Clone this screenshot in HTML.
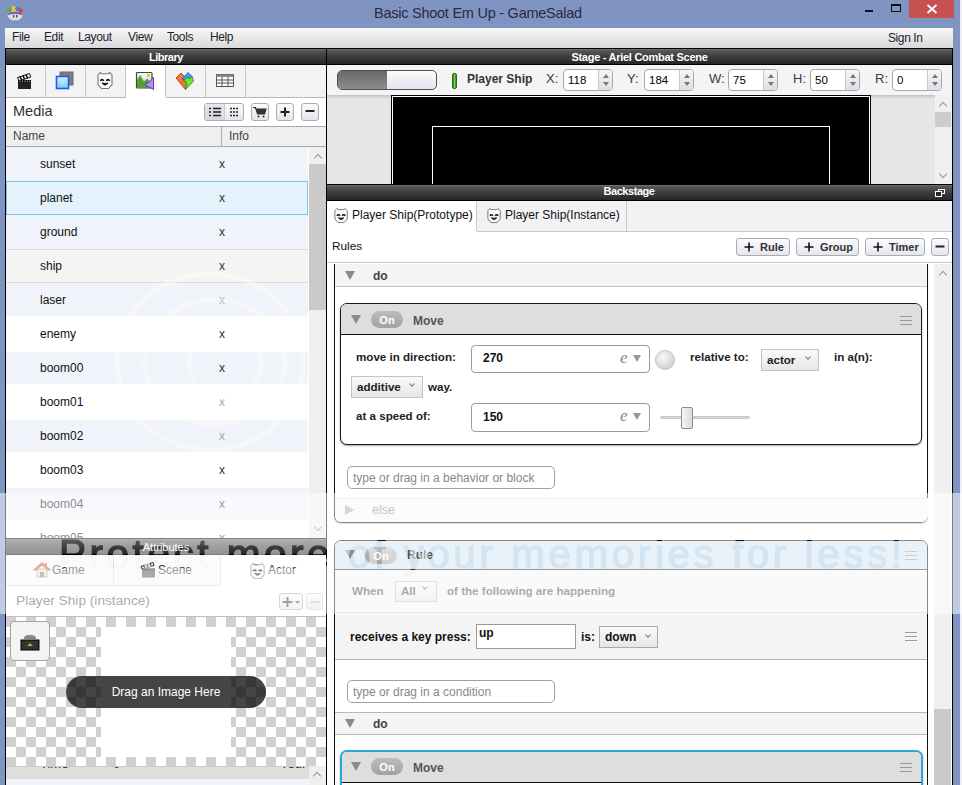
<!DOCTYPE html>
<html><head><meta charset="utf-8">
<style>
*{margin:0;padding:0;box-sizing:border-box}
html,body{width:962px;height:785px;overflow:hidden;background:#8094c4;font-family:"Liberation Sans",sans-serif;position:relative}
.a{position:absolute}
.t{position:absolute;white-space:nowrap;line-height:1}
.hdr{position:absolute;height:17px;background:linear-gradient(#777 0px,#575757 1.5px,#3e3e3e 50%,#262626 100%);border-top:1px solid #000;border-bottom:1px solid #000;color:#fff;font-size:11px;font-weight:bold;letter-spacing:-0.5px;text-align:center;line-height:17px}
.row{position:absolute;left:6px;width:302px;height:34px;font-size:12px;color:#111}
.row .n{position:absolute;left:34px;top:11px;line-height:1}
.row .x{position:absolute;left:213px;top:11px;line-height:1;color:#333}
.btn{position:absolute;border:1px solid #a9acb2;border-radius:3px;background:linear-gradient(#fbfbfc,#e3e6ec)}
.spin{position:absolute;top:69px;width:50px;height:22px;border:1px solid #a8a8a8;border-radius:4px;background:#fff;font-size:11.5px;color:#000}
.spin .v{position:absolute;left:4px;top:5px;line-height:1}
.spin .ar{position:absolute;right:0;top:0;width:14px;height:20px;border-left:1px solid #c8c8c8;background:linear-gradient(#f6f6f8,#dde0e8);border-radius:0 3px 3px 0}
.spin .ar:before{content:"";position:absolute;left:4px;top:4px;border-left:3.5px solid transparent;border-right:3.5px solid transparent;border-bottom:4px solid #777}
.spin .ar:after{content:"";position:absolute;left:4px;top:12px;border-left:3.5px solid transparent;border-right:3.5px solid transparent;border-top:4px solid #777}
.lbl{position:absolute;top:72px;font-size:13px;color:#3a3a48;line-height:1}
.tri{position:absolute;width:0;height:0;border-left:5px solid transparent;border-right:5px solid transparent;border-top:9px solid #8a8a8a}
.pill{position:absolute;height:17px;width:32px;border-radius:9px;background:linear-gradient(#bcbcbc,#a2a2a2);color:#fff;font-size:11px;font-weight:bold;text-align:center;line-height:18px}
.ham{position:absolute;width:12px;height:9px;border-top:1px solid #9a9a9a;border-bottom:1px solid #9a9a9a}
.ham:after{content:"";position:absolute;left:0;top:3px;width:12px;height:1px;background:#9a9a9a}
.bd{font-weight:bold}
.inp{position:absolute;border:1px solid #9c9c9c;border-radius:4px;background:#fff}
.sel{position:absolute;border:1px solid #c4c4c4;background:linear-gradient(#fafafa,#e6e6e6)}
.chev{position:absolute;width:4px;height:4px;border-right:1.2px solid #777;border-bottom:1.2px solid #777;transform:rotate(45deg)}
.upch{position:absolute;width:6px;height:6px;border-left:1.5px solid #999;border-top:1.5px solid #999;transform:rotate(45deg)}
.dnch{position:absolute;width:6px;height:6px;border-right:1.5px solid #999;border-bottom:1.5px solid #999;transform:rotate(45deg)}
</style></head><body>
<!-- title bar -->
<svg class="a" style="left:6px;top:4px" width="18" height="17" viewBox="0 0 18 17">
<ellipse cx="9" cy="11" rx="7.5" ry="5.5" fill="#dcdce4"/>
<path d="M1.5 9 Q9 6 16.5 9 L16 11 Q9 9 2 11Z" fill="#7a5fb0"/>
<circle cx="4" cy="6" r="2.3" fill="#58b030"/><circle cx="8" cy="4.5" r="2.5" fill="#f0c020"/><circle cx="11.5" cy="5" r="2.4" fill="#3a8ad8"/><circle cx="14.5" cy="6.5" r="2.2" fill="#e04030"/>
<rect x="7" y="11" width="1.3" height="2.5" fill="#444"/><rect x="10" y="11" width="1.3" height="2.5" fill="#444"/>
</svg>
<div class="t" style="left:374px;top:6px;font-size:14.5px;letter-spacing:-0.25px;color:#2a2a3a">Basic Shoot Em Up - GameSalad</div>
<div class="a" style="left:865px;top:10px;width:8px;height:2px;background:#111"></div>
<div class="a" style="left:891px;top:4px;width:10px;height:8px;border:1px solid #111;border-top-width:2px"></div>
<div class="a" style="left:909px;top:0;width:45px;height:18px;background:#c75050"></div>
<svg class="a" style="left:926px;top:4px" width="12" height="10"><path d="M1.5 1 L10.5 9 M10.5 1 L1.5 9" stroke="#fff" stroke-width="1.8"/></svg>
<div class="a" style="left:960px;top:0;width:2px;height:785px;background:#eef0f4"></div>

<!-- app area -->
<div class="a" style="left:5px;top:28px;width:948px;height:757px;background:#000"></div>
<!-- menubar -->
<div class="a" style="left:5px;top:28px;width:948px;height:20px;background:linear-gradient(#f7f7f7,#e9e9e9 50%,#d9d9d9)"></div>
<div class="t" style="left:12px;top:31px;font-size:12px;letter-spacing:-0.4px;color:#1e1e2e">File</div>
<div class="t" style="left:44px;top:31px;font-size:12px;letter-spacing:-0.4px;color:#1e1e2e">Edit</div>
<div class="t" style="left:78px;top:31px;font-size:12px;letter-spacing:-0.4px;color:#1e1e2e">Layout</div>
<div class="t" style="left:128px;top:31px;font-size:12px;letter-spacing:-0.4px;color:#1e1e2e">View</div>
<div class="t" style="left:167px;top:31px;font-size:12px;letter-spacing:-0.4px;color:#1e1e2e">Tools</div>
<div class="t" style="left:210px;top:31px;font-size:12px;letter-spacing:-0.4px;color:#1e1e2e">Help</div>
<div class="t" style="left:888px;top:32px;font-size:12px;letter-spacing:-0.4px;color:#1e1e2e">Sign In</div>
<!-- ============ LEFT PANE ============ -->
<div class="a" style="left:6px;top:48px;width:320px;height:737px;background:#fff"></div>
<div class="hdr" style="left:6px;top:48px;width:320px">Library</div>
<div class="a" style="left:6px;top:65px;width:320px;height:33px;background:#f3f3f5;border-bottom:1px solid #b8b8b8"></div>
<div class="a" style="left:126px;top:65px;width:40px;height:33px;background:#fff"></div>
<div class="a" style="left:45px;top:65px;width:1px;height:32px;background:#c4c4c4"></div>
<div class="a" style="left:85px;top:65px;width:1px;height:32px;background:#c4c4c4"></div>
<div class="a" style="left:125px;top:65px;width:1px;height:32px;background:#c4c4c4"></div>
<div class="a" style="left:165px;top:65px;width:1px;height:32px;background:#c4c4c4"></div>
<div class="a" style="left:205px;top:65px;width:1px;height:32px;background:#c4c4c4"></div>
<div class="a" style="left:245px;top:65px;width:1px;height:32px;background:#c4c4c4"></div>
<svg class="a" style="left:16px;top:72px" width="17" height="18" viewBox="0 0 17 18">
<path d="M1.5 5.5 L13.5 1.5 L14.8 5 L2.8 9Z" fill="#f4f4f4" stroke="#111" stroke-width="1"/>
<path d="M4 4.6 L5.5 8 M7 3.6 L8.5 7 M10 2.6 L11.5 6" stroke="#111" stroke-width="1.6"/>
<rect x="2" y="8" width="13" height="9" rx="0.5" fill="#222"/><rect x="2" y="8" width="13" height="2.2" fill="#0a0a0a"/>
<path d="M3.5 9.2 h1 M6 9.2 h1 M8.5 9.2 h1 M11 9.2 h1 M13.2 9.2 h1" stroke="#eee" stroke-width="1"/>
</svg>
<svg class="a" style="left:55px;top:71px" width="20" height="19" viewBox="0 0 20 19">
<rect x="5" y="1" width="13" height="13" fill="#7c7c7c" stroke="#6a6a6a"/>
<defs><linearGradient id="bl" x1="0" y1="0" x2="0" y2="1"><stop offset="0" stop-color="#d8f0ff"/><stop offset="1" stop-color="#7ccaf4"/></linearGradient></defs>
<rect x="1.5" y="5.5" width="12" height="12" fill="url(#bl)" stroke="#1f5cf0" stroke-width="1.6"/>
</svg>
<svg class="a" style="left:97px;top:71px" width="17" height="19" viewBox="0 0 17 19">
<path d="M1 4 L3.2 1.5 L4.8 2.8 L11.2 2.8 L12.8 1.5 L15 4 L15 13.5 L11.5 17.5 L4.5 17.5 L1 13.5Z" fill="#fafafa" stroke="#777" stroke-width="1.1"/><path d="M3.3 9.8 Q5 7.4 6.7 9.8 M9.3 9.8 Q11 7.4 12.7 9.8" stroke="#111" stroke-width="1.8" fill="none"/><path d="M5 12 Q8 16.2 11 12 Q8 13.2 5 12Z" fill="#111" stroke="#111" stroke-width="1"/>
</svg>
<svg class="a" style="left:135px;top:71px" width="20" height="20" viewBox="0 0 20 20">
<defs><linearGradient id="sk" x1="0" y1="0" x2="0" y2="1"><stop offset="0" stop-color="#f0faff"/><stop offset="1" stop-color="#a8dcf4"/></linearGradient></defs>
<rect x="1.5" y="1.5" width="15.5" height="15.5" rx="1" fill="url(#sk)" stroke="#444" stroke-width="1.2"/>
<path d="M2 17 L2 9 L5 4 L9 10.5 L12 7.5 L16.5 12 L16.5 17Z" fill="#5a9e30"/>
<rect x="12" y="3" width="3" height="3" fill="#f8c800"/>
<path d="M11 12 L13.5 12 L18.5 6.5 L18.5 18.5 L13.5 15.5 L11 15.5Z" fill="#b890f0" stroke="#6a30c8" stroke-width="1"/>
</svg>
<svg class="a" style="left:170px;top:66px" width="30" height="28" viewBox="0 0 30 28">
<path d="M6 12 L11 7 L14.5 10.5 L12 13 L16.5 17.5 L15.5 23.5 Z" fill="#f07838" stroke="#c83a10" stroke-width="0.9"/>
<path d="M12 13 L18 6.5 L22 10.5 L19.5 13 L17.5 11 L14.5 14 Z" fill="#4a9af0" stroke="#1a5ad8" stroke-width="0.9"/>
<path d="M14.5 14 L17.5 11 L19.5 13 L22 10.5 L23.5 15 L15.5 23.5 L16.5 17.5 Z" fill="#7ae030" stroke="#1a9a10" stroke-width="0.9"/>
</svg>
<svg class="a" style="left:216px;top:74px" width="18" height="13" viewBox="0 0 18 13">
<rect x="0.5" y="0.5" width="17" height="12" fill="#fff" stroke="#555"/>
<rect x="0.5" y="0.5" width="17" height="2.5" fill="#888"/>
<path d="M0.5 6 H17.5 M0.5 9 H17.5 M6 3 V12.5 M12 3 V12.5" stroke="#555" stroke-width="1"/>
</svg>
<div class="t" style="left:13px;top:104px;font-size:14.5px;color:#333">Media</div>
<div class="btn" style="left:204px;top:103px;width:40px;height:18px"></div>
<div class="a" style="left:205px;top:104px;width:20px;height:16px;background:linear-gradient(#e4e6ea,#d6d9df);border-right:1px solid #c8cbd0"></div>
<svg class="a" style="left:208px;top:107px" width="14" height="10"><path d="M1 1.5h2M5 1.5h8M1 5h2M5 5h8M1 8.5h2M5 8.5h8" stroke="#222" stroke-width="1.3"/></svg>
<svg class="a" style="left:229px;top:107px" width="10" height="10"><path d="M1 1.5h2M4 1.5h2M7 1.5h2M1 5h2M4 5h2M7 5h2M1 8.5h2M4 8.5h2M7 8.5h2" stroke="#222" stroke-width="1.5"/></svg>
<div class="btn" style="left:251px;top:103px;width:18px;height:18px"></div>
<svg class="a" style="left:252px;top:106px" width="16" height="13"><path d="M1 1.5h2.5l2 6.5h7l1.5-5H4" fill="#333" stroke="#333" stroke-width="1.2"/><circle cx="6.5" cy="10.5" r="1" fill="#333"/><circle cx="11.5" cy="10.5" r="1" fill="#333"/></svg>
<div class="btn" style="left:276px;top:103px;width:18px;height:18px"></div>
<svg class="a" style="left:279px;top:106px" width="12" height="12"><path d="M6 1.5v9M1.5 6h9" stroke="#222" stroke-width="2"/></svg>
<div class="btn" style="left:301px;top:103px;width:18px;height:18px"></div>
<svg class="a" style="left:304px;top:106px" width="12" height="12"><path d="M1.5 5h9" stroke="#222" stroke-width="2"/></svg>
<div class="a" style="left:6px;top:126px;width:320px;height:21px;background:#efefef;border-top:1px solid #a8a8a8;border-bottom:1px solid #a8a8a8"></div>
<div class="a" style="left:221px;top:127px;width:1px;height:19px;background:#a8a8a8"></div>
<div class="t" style="left:13px;top:130px;font-size:12px;color:#444">Name</div>
<div class="t" style="left:229px;top:130px;font-size:12px;color:#444">Info</div>
<div class="row" style="top:147px;height:34px;background:#f0f3f9;"><span class="n" style="top:11px;left:34px">sunset</span><span class="x" style="top:11px;left:213px;color:#333">x</span></div>
<div class="row" style="top:181px;height:34px;background:#e4f2fb;border:1px solid #7cc4ec;"><span class="n" style="top:10px;left:33px">planet</span><span class="x" style="top:10px;left:212px;color:#333">x</span></div>
<div class="row" style="top:215px;height:34px;background:#f0f3f9;"><span class="n" style="top:11px;left:34px">ground</span><span class="x" style="top:11px;left:213px;color:#333">x</span></div>
<div class="row" style="top:249px;height:34px;background:#f4f4f4;border-top:1px solid #dcdcdc;border-bottom:1px solid #dcdcdc;"><span class="n" style="top:10px;left:34px">ship</span><span class="x" style="top:10px;left:213px;color:#333">x</span></div>
<div class="row" style="top:283px;height:33px;background:#f0f3f9;"><span class="n" style="top:11px;left:34px">laser</span><span class="x" style="top:11px;left:213px;color:#aaa">x</span></div>
<div class="row" style="top:317px;height:34px;background:#ffffff;"><span class="n" style="top:11px;left:34px">enemy</span><span class="x" style="top:11px;left:213px;color:#333">x</span></div>
<div class="row" style="top:352px;height:32px;background:#f0f3f9;"><span class="n" style="top:10px;left:34px">boom00</span><span class="x" style="top:10px;left:213px;color:#333">x</span></div>
<div class="row" style="top:385px;height:34px;background:#ffffff;"><span class="n" style="top:11px;left:34px">boom01</span><span class="x" style="top:11px;left:213px;color:#aaa">x</span></div>
<div class="row" style="top:420px;height:32px;background:#f0f3f9;"><span class="n" style="top:10px;left:34px">boom02</span><span class="x" style="top:10px;left:213px;color:#aaa">x</span></div>
<div class="row" style="top:453px;height:34px;background:#ffffff;"><span class="n" style="top:11px;left:34px">boom03</span><span class="x" style="top:11px;left:213px;color:#333">x</span></div>
<div class="row" style="top:488px;height:32px;background:#f0f3f9;"><span class="n" style="top:10px;left:34px">boom04</span><span class="x" style="top:10px;left:213px;color:#333">x</span></div>
<div class="row" style="top:521px;height:34px;background:#ffffff;"><span class="n" style="top:11px;left:34px">boom05</span><span class="x" style="top:11px;left:213px;color:#333">x</span></div>
<svg class="a" style="left:6px;top:147px" width="303" height="390"><g fill="none" stroke="#fff" stroke-opacity="0.35" stroke-width="5"><ellipse cx="204" cy="215" rx="93" ry="88"/><ellipse cx="209" cy="215" rx="70" ry="62"/><ellipse cx="219" cy="215" rx="36" ry="36"/></g></svg>
<div class="a" style="left:309px;top:147px;width:17px;height:391px;background:#efefef"></div>
<div class="a" style="left:309px;top:164px;width:17px;height:146px;background:#cacaca"></div>
<div class="upch" style="left:315px;top:155px"></div>
<div class="dnch" style="left:315px;top:524px"></div>
<!-- attributes -->
<div class="hdr" style="left:6px;top:538px;width:320px;height:17px;line-height:16px;font-weight:normal;letter-spacing:0">Attributes</div>
<div class="a" style="left:6px;top:555px;width:320px;height:31px;background:#f7f7f7"></div>
<div class="a" style="left:6px;top:555px;width:108px;height:31px;border-right:1px solid #d8d8d8;border-bottom:1px solid #d8d8d8"></div>
<div class="a" style="left:114px;top:555px;width:107px;height:31px;border-right:1px solid #d8d8d8;border-bottom:1px solid #d8d8d8"></div>
<div class="a" style="left:221px;top:555px;width:105px;height:31px;background:#fff"></div>
<svg class="a" style="left:33px;top:561px" width="18" height="17" viewBox="0 0 18 17"><path d="M4 8 L4 16 L14 16 L14 8Z" fill="#e8e0d8" stroke="#9a8a80" stroke-width="0.8"/><rect x="7" y="11" width="4" height="5" fill="#8a7a70"/><path d="M0.5 9 L9 1.5 L17.5 9 L15 9 L9 4 L3 9Z" fill="#e05a3a" stroke="#b04020" stroke-width="0.8"/><rect x="12" y="2" width="2" height="4" fill="#e05a3a"/></svg>
<div class="t" style="left:52px;top:564px;font-size:12px;color:#333">Game</div>
<svg class="a" style="left:140px;top:561px" width="16" height="17" viewBox="0 0 16 17"><path d="M1 5.5 L13 1.5 L14 4.5 L2 8.5Z" fill="#f0f0f0" stroke="#222" stroke-width="0.9"/><path d="M4 4.5 L5 7.5 M7 3.5 L8 6.5 M10 2.5 L11 5.5" stroke="#222" stroke-width="1.4"/><rect x="2" y="7.5" width="13" height="9" fill="#555"/><rect x="2" y="7.5" width="13" height="2" fill="#222"/></svg>
<div class="t" style="left:158px;top:564px;font-size:12px;color:#333">Scene</div>
<svg class="a" style="left:250px;top:562px" width="16" height="18" viewBox="0 0 17 19"><path d="M1 4 L3.2 1.5 L4.8 2.8 L11.2 2.8 L12.8 1.5 L15 4 L15 13.5 L11.5 17.5 L4.5 17.5 L1 13.5Z" fill="#fafafa" stroke="#777" stroke-width="1.1"/><path d="M3.3 9.8 Q5 7.4 6.7 9.8 M9.3 9.8 Q11 7.4 12.7 9.8" stroke="#111" stroke-width="1.8" fill="none"/><path d="M5 12 Q8 16.2 11 12 Q8 13.2 5 12Z" fill="#111" stroke="#111" stroke-width="1"/></svg>
<div class="t" style="left:268px;top:564px;font-size:12px;color:#333">Actor</div>
<div class="a" style="left:6px;top:586px;width:320px;height:31px;background:#fff;border-bottom:1px solid #c0c0c0"></div>
<div class="t" style="left:16px;top:594px;font-size:13.7px;color:#555">Player Ship (instance)</div>
<div class="btn" style="left:279px;top:593px;width:24px;height:17px"></div>
<svg class="a" style="left:282px;top:596px" width="20" height="12"><path d="M5.5 1v10M0.5 6h10" stroke="#444" stroke-width="2"/><path d="M13 5h5l-2.5 3z" fill="#555"/></svg>
<div class="btn" style="left:306px;top:593px;width:17px;height:17px;border-color:#ccc"></div>
<svg class="a" style="left:309px;top:596px" width="12" height="12"><path d="M1.5 6h9" stroke="#bbb" stroke-width="2"/></svg>
<svg class="a" style="left:0;top:0" width="326" height="767"><path d="M6 617h10v10h-10z M26 617h10v10h-10z M46 617h10v10h-10z M66 617h10v10h-10z M86 617h10v10h-10z M106 617h10v10h-10z M126 617h10v10h-10z M146 617h10v10h-10z M166 617h10v10h-10z M186 617h10v10h-10z M206 617h10v10h-10z M226 617h10v10h-10z M246 617h10v10h-10z M266 617h10v10h-10z M286 617h10v10h-10z M306 617h10v10h-10z M16 627h10v10h-10z M36 627h10v10h-10z M56 627h10v10h-10z M76 627h10v10h-10z M96 627h10v10h-10z M116 627h10v10h-10z M136 627h10v10h-10z M156 627h10v10h-10z M176 627h10v10h-10z M196 627h10v10h-10z M216 627h10v10h-10z M236 627h10v10h-10z M256 627h10v10h-10z M276 627h10v10h-10z M296 627h10v10h-10z M316 627h10v10h-10z M6 637h10v10h-10z M26 637h10v10h-10z M46 637h10v10h-10z M66 637h10v10h-10z M86 637h10v10h-10z M106 637h10v10h-10z M126 637h10v10h-10z M146 637h10v10h-10z M166 637h10v10h-10z M186 637h10v10h-10z M206 637h10v10h-10z M226 637h10v10h-10z M246 637h10v10h-10z M266 637h10v10h-10z M286 637h10v10h-10z M306 637h10v10h-10z M16 647h10v10h-10z M36 647h10v10h-10z M56 647h10v10h-10z M76 647h10v10h-10z M96 647h10v10h-10z M116 647h10v10h-10z M136 647h10v10h-10z M156 647h10v10h-10z M176 647h10v10h-10z M196 647h10v10h-10z M216 647h10v10h-10z M236 647h10v10h-10z M256 647h10v10h-10z M276 647h10v10h-10z M296 647h10v10h-10z M316 647h10v10h-10z M6 657h10v10h-10z M26 657h10v10h-10z M46 657h10v10h-10z M66 657h10v10h-10z M86 657h10v10h-10z M106 657h10v10h-10z M126 657h10v10h-10z M146 657h10v10h-10z M166 657h10v10h-10z M186 657h10v10h-10z M206 657h10v10h-10z M226 657h10v10h-10z M246 657h10v10h-10z M266 657h10v10h-10z M286 657h10v10h-10z M306 657h10v10h-10z M16 667h10v10h-10z M36 667h10v10h-10z M56 667h10v10h-10z M76 667h10v10h-10z M96 667h10v10h-10z M116 667h10v10h-10z M136 667h10v10h-10z M156 667h10v10h-10z M176 667h10v10h-10z M196 667h10v10h-10z M216 667h10v10h-10z M236 667h10v10h-10z M256 667h10v10h-10z M276 667h10v10h-10z M296 667h10v10h-10z M316 667h10v10h-10z M6 677h10v10h-10z M26 677h10v10h-10z M46 677h10v10h-10z M66 677h10v10h-10z M86 677h10v10h-10z M106 677h10v10h-10z M126 677h10v10h-10z M146 677h10v10h-10z M166 677h10v10h-10z M186 677h10v10h-10z M206 677h10v10h-10z M226 677h10v10h-10z M246 677h10v10h-10z M266 677h10v10h-10z M286 677h10v10h-10z M306 677h10v10h-10z M16 687h10v10h-10z M36 687h10v10h-10z M56 687h10v10h-10z M76 687h10v10h-10z M96 687h10v10h-10z M116 687h10v10h-10z M136 687h10v10h-10z M156 687h10v10h-10z M176 687h10v10h-10z M196 687h10v10h-10z M216 687h10v10h-10z M236 687h10v10h-10z M256 687h10v10h-10z M276 687h10v10h-10z M296 687h10v10h-10z M316 687h10v10h-10z M6 697h10v10h-10z M26 697h10v10h-10z M46 697h10v10h-10z M66 697h10v10h-10z M86 697h10v10h-10z M106 697h10v10h-10z M126 697h10v10h-10z M146 697h10v10h-10z M166 697h10v10h-10z M186 697h10v10h-10z M206 697h10v10h-10z M226 697h10v10h-10z M246 697h10v10h-10z M266 697h10v10h-10z M286 697h10v10h-10z M306 697h10v10h-10z M16 707h10v10h-10z M36 707h10v10h-10z M56 707h10v10h-10z M76 707h10v10h-10z M96 707h10v10h-10z M116 707h10v10h-10z M136 707h10v10h-10z M156 707h10v10h-10z M176 707h10v10h-10z M196 707h10v10h-10z M216 707h10v10h-10z M236 707h10v10h-10z M256 707h10v10h-10z M276 707h10v10h-10z M296 707h10v10h-10z M316 707h10v10h-10z M6 717h10v10h-10z M26 717h10v10h-10z M46 717h10v10h-10z M66 717h10v10h-10z M86 717h10v10h-10z M106 717h10v10h-10z M126 717h10v10h-10z M146 717h10v10h-10z M166 717h10v10h-10z M186 717h10v10h-10z M206 717h10v10h-10z M226 717h10v10h-10z M246 717h10v10h-10z M266 717h10v10h-10z M286 717h10v10h-10z M306 717h10v10h-10z M16 727h10v10h-10z M36 727h10v10h-10z M56 727h10v10h-10z M76 727h10v10h-10z M96 727h10v10h-10z M116 727h10v10h-10z M136 727h10v10h-10z M156 727h10v10h-10z M176 727h10v10h-10z M196 727h10v10h-10z M216 727h10v10h-10z M236 727h10v10h-10z M256 727h10v10h-10z M276 727h10v10h-10z M296 727h10v10h-10z M316 727h10v10h-10z M6 737h10v10h-10z M26 737h10v10h-10z M46 737h10v10h-10z M66 737h10v10h-10z M86 737h10v10h-10z M106 737h10v10h-10z M126 737h10v10h-10z M146 737h10v10h-10z M166 737h10v10h-10z M186 737h10v10h-10z M206 737h10v10h-10z M226 737h10v10h-10z M246 737h10v10h-10z M266 737h10v10h-10z M286 737h10v10h-10z M306 737h10v10h-10z M16 747h10v10h-10z M36 747h10v10h-10z M56 747h10v10h-10z M76 747h10v10h-10z M96 747h10v10h-10z M116 747h10v10h-10z M136 747h10v10h-10z M156 747h10v10h-10z M176 747h10v10h-10z M196 747h10v10h-10z M216 747h10v10h-10z M236 747h10v10h-10z M256 747h10v10h-10z M276 747h10v10h-10z M296 747h10v10h-10z M316 747h10v10h-10z M6 757h10v10h-10z M26 757h10v10h-10z M46 757h10v10h-10z M66 757h10v10h-10z M86 757h10v10h-10z M106 757h10v10h-10z M126 757h10v10h-10z M146 757h10v10h-10z M166 757h10v10h-10z M186 757h10v10h-10z M206 757h10v10h-10z M226 757h10v10h-10z M246 757h10v10h-10z M266 757h10v10h-10z M286 757h10v10h-10z M306 757h10v10h-10z" fill="#d0d0d0"/></svg>
<div class="a" style="left:101px;top:627px;width:130px;height:130px;background:#fff"></div>
<div class="a" style="left:10px;top:621px;width:40px;height:40px;background:#f4f4f4;border:1px solid #a4a4a4;border-radius:4px"></div>
<svg class="a" style="left:20px;top:634px" width="20" height="17" viewBox="0 0 20 17"><path d="M4 5 Q4 1 7 1.5 Q8.5 0 10 1.5 Q11.5 0 13 1.5 Q16 1 16 5Z" fill="#8a8a8a"/><rect x="1" y="6" width="18" height="10" fill="#333" stroke="#000"/><path d="M7 12 L10 9 L13 12Z" fill="#7ad040"/></svg>
<div class="a" style="left:66px;top:676px;width:200px;height:32px;border-radius:16px;background:rgba(0,0,0,0.73)"></div>
<div class="t" style="left:66px;top:686px;width:200px;text-align:center;font-size:12px;color:#fff">Drag an Image Here</div>
<div class="a" style="left:6px;top:766px;width:303px;height:13px;background:#dedede;border-top:1px solid #c8c8c8"></div>
<div class="a" style="left:6px;top:779px;width:303px;height:6px;background:#f0f3f9"></div>
<div class="t" style="left:40px;top:757px;font-size:13px;color:#222;clip-path:inset(10px 0 0 0)">Time</div>
<div class="t" style="left:113px;top:757px;font-size:13px;color:#222;clip-path:inset(10px 0 0 0)">0</div>
<div class="t" style="left:280px;top:757px;font-size:13px;color:#222;clip-path:inset(10px 0 0 0)">Your</div>
<div class="a" style="left:309px;top:766px;width:17px;height:19px;background:#efefef"></div>
<div class="upch" style="left:314px;top:773px"></div>
<div class="a" style="left:326px;top:48px;width:1px;height:737px;background:#000"></div>
<!-- ============ RIGHT PANE ============ -->
<div class="hdr" style="left:327px;top:48px;width:625px;letter-spacing:-0.27px">Stage - Ariel Combat Scene</div>
<div class="a" style="left:327px;top:65px;width:625px;height:30px;background:#f4f4f4"></div>
<div class="a" style="left:327px;top:95px;width:625px;height:89px;background:#e6e6e6"></div>
<div class="a" style="left:327px;top:95px;width:608px;height:4px;background:linear-gradient(rgba(0,0,0,0.16),rgba(0,0,0,0))"></div>
<div class="a" style="left:391px;top:95px;width:480px;height:89px;background:#000"></div>
<div class="a" style="left:392px;top:96px;width:478px;height:88px;border:1px solid #fff;border-bottom:none"></div>
<div class="a" style="left:432px;top:126px;width:398px;height:58px;border:1px solid #fff;border-bottom:none"></div>
<div class="a" style="left:935px;top:95px;width:17px;height:89px;background:#f0f0f0"></div>
<div class="a" style="left:935px;top:112px;width:16px;height:15px;background:#cdcdcd"></div>
<div class="upch" style="left:940px;top:103px"></div>
<div class="dnch" style="left:940px;top:171px"></div>
<div class="a" style="left:337px;top:70px;width:100px;height:20px;border:1px solid #505050;border-radius:5px;background:linear-gradient(#fafbfd,#e2e5ee);overflow:hidden"><div class="a" style="left:0;top:0;width:49px;height:18px;background:linear-gradient(#686868,#8c8c8c)"></div></div>
<div class="a" style="left:452px;top:73px;width:5px;height:16px;border-radius:2px;background:linear-gradient(90deg,#2a7a1a,#7ad050,#2a8a1a);border:1px solid #2a6a1a"></div>
<div class="t bd" style="left:467px;top:73px;font-size:12px;color:#333">Player Ship</div>
<div class="lbl" style="left:546px">X:</div>
<div class="spin" style="left:563px"><span class="v">118</span><div class="ar"></div></div>
<div class="lbl" style="left:627px">Y:</div>
<div class="spin" style="left:644px"><span class="v">184</span><div class="ar"></div></div>
<div class="lbl" style="left:709px">W:</div>
<div class="spin" style="left:728px"><span class="v">75</span><div class="ar"></div></div>
<div class="lbl" style="left:793px">H:</div>
<div class="spin" style="left:810px"><span class="v">50</span><div class="ar"></div></div>
<div class="lbl" style="left:875px">R:</div>
<div class="spin" style="left:892px"><span class="v">0</span><div class="ar"></div></div>
<div class="hdr" style="left:327px;top:184px;width:625px;padding-right:21px;line-height:13px;letter-spacing:-0.45px">Backstage</div>
<svg class="a" style="left:935px;top:189px" width="10" height="8"><rect x="3.5" y="0.5" width="6" height="4" fill="none" stroke="#fff"/><rect x="0.5" y="2.5" width="6" height="5" fill="#2a2a2a" stroke="#fff"/></svg>
<div class="a" style="left:327px;top:201px;width:625px;height:31px;background:#f2f2f4;border-bottom:1px solid #c8c8c8"></div>
<div class="a" style="left:327px;top:201px;width:150px;height:31px;background:#fff"></div>
<div class="a" style="left:476px;top:201px;width:1px;height:30px;background:#c8c8c8"></div>
<div class="a" style="left:626px;top:201px;width:1px;height:30px;background:#c8c8c8"></div>
<svg class="a" style="left:334px;top:207px" width="15" height="17" viewBox="0 0 17 19"><path d="M1 4 L3.2 1.5 L4.8 2.8 L11.2 2.8 L12.8 1.5 L15 4 L15 13.5 L11.5 17.5 L4.5 17.5 L1 13.5Z" fill="#fafafa" stroke="#777" stroke-width="1.1"/><path d="M3.3 9.8 Q5 7.4 6.7 9.8 M9.3 9.8 Q11 7.4 12.7 9.8" stroke="#111" stroke-width="1.8" fill="none"/><path d="M5 12 Q8 16.2 11 12 Q8 13.2 5 12Z" fill="#111" stroke="#111" stroke-width="1"/></svg>
<div class="t" style="left:352px;top:209px;font-size:12px;color:#111">Player Ship(Prototype)</div>
<svg class="a" style="left:487px;top:207px" width="15" height="17" viewBox="0 0 17 19"><path d="M1 4 L3.2 1.5 L4.8 2.8 L11.2 2.8 L12.8 1.5 L15 4 L15 13.5 L11.5 17.5 L4.5 17.5 L1 13.5Z" fill="#fafafa" stroke="#777" stroke-width="1.1"/><path d="M3.3 9.8 Q5 7.4 6.7 9.8 M9.3 9.8 Q11 7.4 12.7 9.8" stroke="#111" stroke-width="1.8" fill="none"/><path d="M5 12 Q8 16.2 11 12 Q8 13.2 5 12Z" fill="#111" stroke="#111" stroke-width="1"/></svg>
<div class="t" style="left:505px;top:209px;font-size:12px;color:#111">Player Ship(Instance)</div>
<div class="a" style="left:327px;top:232px;width:625px;height:31px;background:#fff;border-bottom:1px solid #c8c8c8"></div>
<div class="t" style="left:332px;top:241px;font-size:11.8px;color:#111">Rules</div>
<div class="btn" style="left:736px;top:238px;width:54px;height:18px"></div>
<svg class="a" style="left:744px;top:242px" width="11" height="11"><path d="M5 0.5v9M0.5 5h9" stroke="#111" stroke-width="1.6"/></svg>
<div class="t bd" style="left:760px;top:242px;font-size:11px;color:#333">Rule</div>
<div class="btn" style="left:796px;top:238px;width:63px;height:18px"></div>
<svg class="a" style="left:804px;top:242px" width="11" height="11"><path d="M5 0.5v9M0.5 5h9" stroke="#111" stroke-width="1.6"/></svg>
<div class="t bd" style="left:820px;top:242px;font-size:11px;color:#333">Group</div>
<div class="btn" style="left:865px;top:238px;width:60px;height:18px"></div>
<svg class="a" style="left:873px;top:242px" width="11" height="11"><path d="M5 0.5v9M0.5 5h9" stroke="#111" stroke-width="1.6"/></svg>
<div class="t bd" style="left:889px;top:242px;font-size:11px;color:#333">Timer</div>
<div class="btn" style="left:931px;top:238px;width:18px;height:18px"></div>
<svg class="a" style="left:934px;top:241px" width="12" height="11"><path d="M1.5 5.5h9" stroke="#222" stroke-width="2"/></svg>
<!-- rules content -->
<div class="a" style="left:327px;top:263px;width:625px;height:522px;background:#fff"></div>
<div class="a" style="left:934px;top:264px;width:17px;height:521px;background:#f0f0f0"></div>
<div class="a" style="left:934px;top:709px;width:17px;height:76px;background:#cacaca"></div>
<div class="upch" style="left:940px;top:272px"></div>
<div class="a" style="left:334px;top:264px;width:594px;height:259px;border:1px solid #111;border-top:none;border-radius:0 0 7px 7px;box-shadow:0 1px 1px rgba(0,0,0,.25)"></div>
<div class="a" style="left:335px;top:264px;width:592px;height:23px;background:#f4f4f4;border-bottom:1px solid #c4c4c4"></div>
<div class="tri" style="left:345px;top:271px"></div>
<div class="t bd" style="left:373px;top:270px;font-size:12px;color:#444">do</div>
<div class="a" style="left:340px;top:303px;width:582px;height:142px;border:1px solid #1a1a1a;border-radius:7px;background:#fff;box-shadow:0 1px 2px rgba(0,0,0,.35);overflow:hidden"><div class="a" style="left:0;top:0;width:100%;height:31px;background:#dedede;border-bottom:1px solid #111"></div></div>
<div class="tri" style="left:351px;top:315px"></div>
<div class="pill" style="left:371px;top:311px">On</div>
<div class="t bd" style="left:413px;top:315px;font-size:12px;color:#555">Move</div>
<div class="ham" style="left:900px;top:316px"></div>
<div class="t bd" style="left:356px;top:351px;font-size:11.6px;color:#222">move in direction:</div>
<div class="inp" style="left:471px;top:345px;width:179px;height:28px"></div>
<div class="t" style="left:483px;top:352px;font-size:12px;font-weight:bold;color:#111">270</div>
<div class="t" style="left:620px;top:349px;font-size:17px;font-style:italic;font-family:'Liberation Serif',serif;color:#888">e</div>
<div class="a" style="left:633px;top:355px;border-left:4px solid transparent;border-right:4px solid transparent;border-top:7px solid #999"></div>
<div class="a" style="left:655px;top:350px;width:20px;height:20px;border-radius:50%;background:radial-gradient(circle at 40% 35%,#fafafa,#d4d4d4 70%,#bbb);border:1px solid #c4c4c4"></div>
<div class="t bd" style="left:690px;top:351px;font-size:11.6px;color:#222">relative to:</div>
<div class="sel" style="left:761px;top:349px;width:58px;height:22px"></div>
<div class="t bd" style="left:767px;top:354px;font-size:11.6px;color:#222">actor</div>
<div class="chev" style="left:806px;top:355px"></div>
<div class="t bd" style="left:834px;top:351px;font-size:11.6px;color:#222">in a(n):</div>
<div class="sel" style="left:351px;top:376px;width:72px;height:22px"></div>
<div class="t bd" style="left:357px;top:381px;font-size:11.6px;color:#222">additive</div>
<div class="chev" style="left:410px;top:382px"></div>
<div class="t bd" style="left:428px;top:381px;font-size:11.6px;color:#222">way.</div>
<div class="t bd" style="left:356px;top:410px;font-size:11.6px;color:#222">at a speed of:</div>
<div class="inp" style="left:471px;top:403px;width:179px;height:29px"></div>
<div class="t bd" style="left:483px;top:411px;font-size:12px;color:#111">150</div>
<div class="t" style="left:620px;top:407px;font-size:17px;font-style:italic;font-family:'Liberation Serif',serif;color:#888">e</div>
<div class="a" style="left:633px;top:413px;border-left:4px solid transparent;border-right:4px solid transparent;border-top:7px solid #999"></div>
<div class="a" style="left:660px;top:416px;width:90px;height:3px;border-radius:2px;background:#d8d8d8;border:1px solid #c8c8c8"></div>
<div class="a" style="left:681px;top:407px;width:12px;height:22px;border-radius:2px;background:linear-gradient(90deg,#f4f4f4,#dcdcdc);border:1px solid #8c8c8c"></div>
<div class="inp" style="left:347px;top:466px;width:208px;height:23px;border-color:#a0a0a0;border-radius:5px"></div>
<div class="t" style="left:353px;top:472px;font-size:12px;color:#888">type or drag in a behavior or block</div>
<div class="a" style="left:335px;top:498px;width:593px;height:24px;background:#f6f6f6;border-top:1px solid #dcdcdc;border-radius:0 0 6px 6px"></div>
<div class="a" style="left:345px;top:505px;border-top:5px solid transparent;border-bottom:5px solid transparent;border-left:9px solid #aaa"></div>
<div class="t" style="left:372px;top:504px;font-size:12.6px;color:#888">else</div>
<div class="a" style="left:334px;top:540px;width:594px;height:260px;border:1px solid #111;border-radius:7px;background:#fff;overflow:hidden"><div class="a" style="left:0;top:0;width:100%;height:29px;background:#d3e5f3;border-bottom:1px solid #333"></div><div class="a" style="left:0;top:29px;width:100%;height:43px;background:#f4f4f4;border-bottom:1px solid #c8c8c8"></div><div class="a" style="left:0;top:72px;width:100%;height:47px;background:#f4f4f4;border-bottom:1px solid #b4b4b4"></div><div class="a" style="left:0;top:171px;width:100%;height:23px;background:#f4f4f4;border-top:1px solid #b8b8b8;border-bottom:1px solid #b8b8b8"></div></div>
<div class="tri" style="left:345px;top:550px"></div>
<div class="pill" style="left:365px;top:547px;background:linear-gradient(#bcbcbc,#a2a2a2)">On</div>
<div class="t bd" style="left:407px;top:549px;font-size:12px;color:#555">Rule</div>
<div class="ham" style="left:905px;top:551px"></div>
<div class="t bd" style="left:352px;top:585px;font-size:11.6px;color:#555">When</div>
<div class="sel" style="left:395px;top:581px;width:42px;height:21px"></div>
<div class="t bd" style="left:401px;top:585px;font-size:11.6px;color:#555">All</div>
<div class="chev" style="left:423px;top:585px"></div>
<div class="t bd" style="left:447px;top:585px;font-size:11.6px;color:#555">of the following are happening</div>
<div class="t bd" style="left:350px;top:631px;font-size:12px;color:#111">receives a key press:</div>
<div class="a" style="left:476px;top:624px;width:100px;height:25px;background:#fff;border:1px solid #9a9a9a"></div>
<div class="t bd" style="left:479px;top:627px;font-size:12px;color:#111">up</div>
<div class="t bd" style="left:581px;top:631px;font-size:12px;color:#111">is:</div>
<div class="sel" style="left:599px;top:626px;width:59px;height:22px;border-color:#aaa"></div>
<div class="t bd" style="left:605px;top:631px;font-size:12px;color:#111">down</div>
<div class="chev" style="left:646px;top:633px"></div>
<div class="ham" style="left:905px;top:632px"></div>
<div class="inp" style="left:347px;top:680px;width:208px;height:23px;border-color:#a0a0a0;border-radius:5px"></div>
<div class="t" style="left:353px;top:686px;font-size:12px;color:#888">type or drag in a condition</div>
<div class="tri" style="left:345px;top:719px"></div>
<div class="t bd" style="left:373px;top:718px;font-size:12px;color:#444">do</div>
<div class="a" style="left:340px;top:750px;width:583px;height:142px;border:2px solid #29a8e0;border-radius:7px;background:#fff;box-shadow:0 1px 2px rgba(0,0,0,.35);overflow:hidden"><div class="a" style="left:0;top:0;width:100%;height:31px;background:#dedede;border-bottom:1px solid #111"></div></div>
<div class="tri" style="left:351px;top:762px"></div>
<div class="pill" style="left:371px;top:758px">On</div>
<div class="t bd" style="left:413px;top:762px;font-size:12px;color:#555">Move</div>
<div class="ham" style="left:900px;top:763px"></div>
<!-- watermark -->
<svg class="a" style="left:0;top:0" width="962" height="785" viewBox="0 0 962 785">
<defs><mask id="wm" maskUnits="userSpaceOnUse" x="0" y="0" width="962" height="785">
<rect x="0" y="493" width="962" height="121" fill="#fff"/>
<text x="59" y="567.5" textLength="843" lengthAdjust="spacing" font-family="Liberation Sans" font-weight="normal" font-size="40.5" stroke="#000" stroke-width="1.3" fill="#000">Protect more of your memories for less!</text>
</mask></defs>
<rect x="0" y="493" width="962" height="121" fill="#fff" fill-opacity="0.5" mask="url(#wm)"/>
</svg>
</body></html>
